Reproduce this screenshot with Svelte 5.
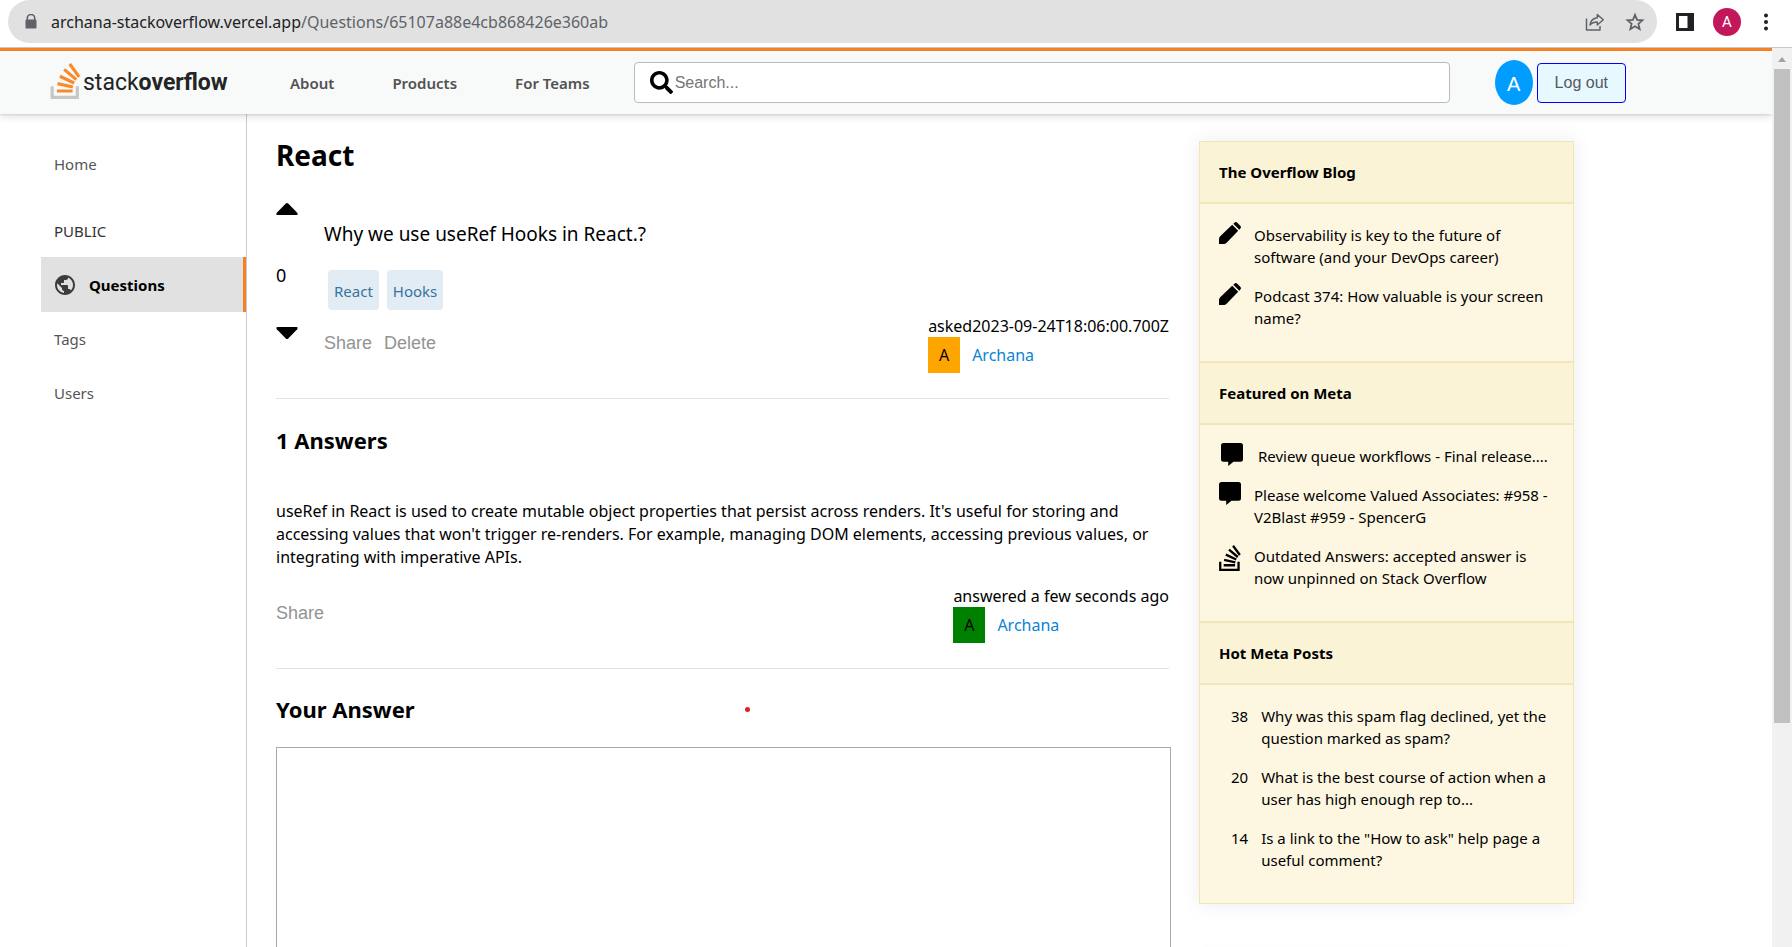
<script>
  const navLinks = ['About', 'Products', 'For Teams'];
  const tags = ['React', 'Hooks'];
  const blogPosts = [
    'Observability is key to the future of software (and your DevOps career)',
    'Podcast 374: How valuable is your screen name?'
  ];
  const featured = [
    { icon: 'comment', indent: true, text: 'Review queue workflows - Final release....' },
    { icon: 'comment', text: 'Please welcome Valued Associates: #958 - V2Blast #959 - SpencerG' },
    { icon: 'stack', text: 'Outdated Answers: accepted answer is now unpinned on Stack Overflow' }
  ];
  const hotPosts = [
    { score: 38, text: 'Why was this spam flag declined, yet the question marked as spam?' },
    { score: 20, text: 'What is the best course of action when a user has high enough rep to...' },
    { score: 14, text: 'Is a link to the "How to ask" help page a useful comment?' }
  ];
  const bars =
    'M15.725 0l-1.72 1.277 6.39 8.588 1.716-1.277L15.725 0zm-3.94 3.418l-1.369 1.644 8.225 6.85 1.369-1.644-8.225-6.85zm-3.15 4.465l-.905 1.94 9.702 4.517.904-1.94-9.701-4.517zm-1.85 4.86l-.44 2.093 10.473 2.201.44-2.092-10.473-2.203zM6.155 17.603v2.13h10.66v-2.13H6.154Z';
  const tray = 'M1.89 15.47V24h19.19v-8.53h-2.133v6.397H4.021v-6.396H1.89z';
  let query = $state('');
  let answer = $state('');
  let votes = $state(0);
</script>

<div class="window">
  <div class="toolbar">
    <div class="address">
      <svg class="lock" width="12" height="16" viewBox="0 0 12 16" aria-hidden="true">
        <path d="M2.3 6V4.2a3.7 3.7 0 0 1 7.4 0V6" fill="none" stroke="#5f6368" stroke-width="1.6" />
        <rect x="0.5" y="5.6" width="11" height="9" rx="1.2" fill="#5f6368" />
      </svg>
      <span class="url">archana-stackoverflow.vercel.app<span class="path">/Questions/65107a88e4cb868426e360ab</span></span>
      <button class="plain" aria-label="Share this page">
        <svg width="20" height="20" viewBox="0 0 20 20" fill="none" stroke="#5f6368" stroke-width="1.5" stroke-linejoin="round">
          <path d="M1.5 6.5V18h13.5v-4" />
          <path d="M12.3 2.5l6 5.3-6 5.2V9.9c-3.3 0-5.6.9-7.3 3.1.6-4 3-6.700 7.300-7.200z" />
        </svg>
      </button>
      <button class="plain" aria-label="Bookmark this page">
        <svg width="20" height="20" viewBox="0 0 20 20" fill="none" stroke="#5f6368" stroke-width="1.8">
          <path d="M10 2.800l2.100 5 5.400.45-4.100 3.550 1.250 5.300L10 14.250 5.350 17.100l1.250-5.300L2.500 8.250l5.400-.45z" />
        </svg>
      </button>
    </div>
    <button class="plain" aria-label="Side panel">
      <svg width="18" height="18" viewBox="0 0 18 18">
        <path d="M0 0h18v18H0zM3 3v12h8.500V3z" fill="#202124" fill-rule="evenodd" />
      </svg>
    </button>
    <button class="plain profile" aria-label="Profile">A</button>
    <button class="plain" aria-label="Browser menu">
      <svg width="6" height="18" viewBox="0 0 6 18" fill="#202124">
        <circle cx="3" cy="2.500" r="2" /><circle cx="3" cy="9" r="2" /><circle cx="3" cy="15.500" r="2" />
      </svg>
    </button>
  </div>

  <div class="viewport">
    <div class="page">
      <header>
        <a class="logo" href="#home" aria-label="Stack Overflow">
          <svg width="31" height="36" viewBox="1.500 0 21 24" preserveAspectRatio="none">
            <path d={bars} fill="#f98a2b" /><path d={tray} fill="#c6c6c6" />
          </svg>
          <span>stack<b>overflow</b></span>
        </a>
        <nav class="top">
          {#each navLinks as link}<a href="#top">{link}</a>{/each}
        </nav>
        <form class="search" role="search">
          <svg width="23" height="23" viewBox="0 0 512 512" aria-hidden="true">
            <path d="M505 442.700L405.300 343c-4.500-4.500-10.600-7-17-7H372c27.600-35.300 44-79.700 44-128C416 93.100 322.900 0 208 0S0 93.100 0 208s93.100 208 208 208c48.300 0 92.700-16.400 128-44v16.300c0 6.400 2.500 12.500 7 17l99.700 99.700c9.400 9.400 24.600 9.400 33.900 0l28.300-28.300c9.400-9.400 9.400-24.600.1-34zM208 336c-70.700 0-128-57.200-128-128 0-70.700 57.200-128 128-128 70.700 0 128 57.200 128 128 0 70.700-57.200 128-128 128z" />
          </svg>
          <input type="text" placeholder="Search..." aria-label="Search" bind:value={query} />
        </form>
        <div class="account">
          <span class="avatar">A</span>
          <button class="logout">Log out</button>
        </div>
      </header>

      <div class="body">
        <nav class="side" aria-label="Sections">
          <a href="#home">Home</a>
          <p>PUBLIC</p>
          <a class="active" href="#questions">
            <svg width="24" height="24" viewBox="0 0 24 24" fill="#3c3c3c" aria-hidden="true">
              <path d="M12 2C6.480 2 2 6.480 2 12s4.480 10 10 10 10-4.480 10-10S17.520 2 12 2zm-1 17.930c-3.950-.49-7-3.850-7-7.930 0-.62.08-1.210.21-1.790L9 15v1c0 1.100.9 2 2 2v1.930zm6.900-2.540c-.26-.81-1-1.390-1.900-1.390h-1v-3c0-.55-.45-1-1-1H8v-2h2c.55 0 1-.45 1-1V7h2c1.100 0 2-.9 2-2v-.41c2.930 1.190 5 4.060 5 7.410 0 2.080-.8 3.970-2.100 5.390z" />
            </svg>
            Questions
          </a>
          <a href="#tags">Tags</a>
          <a href="#users">Users</a>
        </nav>

        <main>
          <h1>React</h1>
          <section class="question">
            <div class="votes">
              <button class="plain" aria-label="Up vote" onclick={() => votes++}>
                <svg width="22" height="12" viewBox="0 0 22 12"><path d="M9.800.6q1.200-1 2.400 0l9 9.200q1.200 2.200-.8 2.200H1.600q-2 0-.8-2.200z" /></svg>
              </button>
              <span>{votes}</span>
              <button class="plain" aria-label="Down vote" onclick={() => votes--}>
                <svg width="22" height="12" viewBox="0 0 22 12"><path d="M9.800 11.400q1.200 1 2.400 0l9-9.200Q22.400 0 20.400 0H1.600Q-.4 0 .8 2.200z" /></svg>
              </button>
            </div>
            <div class="content">
              <p class="asked">Why we use useRef Hooks in React.?</p>
              <ul class="tags">
                {#each tags as tag}<li><a href="#tags">{tag}</a></li>{/each}
              </ul>
              <div class="meta">
                <div class="actions"><button class="plain">Share</button><button class="plain">Delete</button></div>
                <div class="author">
                  <p>asked2023-09-24T18:06:00.700Z</p>
                  <a href="#user"><span class="badge">A</span>Archana</a>
                </div>
              </div>
            </div>
          </section>

          <section class="answers">
            <h2>1 Answers</h2>
            <p class="text">
              useRef in React is used to create mutable object properties that persist across renders. It's useful for
              storing and accessing values that won't trigger re-renders. For example, managing DOM elements, accessing
              previous values, or integrating with imperative APIs.
            </p>
            <div class="meta">
              <div class="actions"><button class="plain">Share</button></div>
              <div class="author">
                <p>answered a few seconds ago</p>
                <a href="#user"><span class="badge green">A</span>Archana</a>
              </div>
            </div>
          </section>

          <section class="reply">
            <div class="reply-head">
              <h2><label for="answer">Your Answer</label></h2>
              <i class="dot"></i>
            </div>
            <textarea id="answer" bind:value={answer}></textarea>
          </section>
        </main>

        <div class="rail">
          <aside class="widget">
            <h3>The Overflow Blog</h3>
            <ul>
              {#each blogPosts as post}
                <li>
                  <svg width="22" height="22" viewBox="0 0 22 22" aria-hidden="true">
                    <path d="M0 22v-4.800q0-1.700 1.200-2.900L13.200 2.800l6 6L7.600 20.700Q6.400 22 4.800 22zM14.300 1.700l1.100-1q1.500-1.300 2.900 0l3 3q1.300 1.400 0 2.900l-1 1.100z" />
                  </svg>
                  <span>{post}</span>
                </li>
              {/each}
            </ul>
            <h3>Featured on Meta</h3>
            <ul>
              {#each featured as item}
                <li class:indent={item.indent}>
                  {#if item.icon === 'comment'}
                    <svg width="22" height="23" viewBox="0 0 22 23" aria-hidden="true">
                      <path d="M2.500 0h17Q22 0 22 2.500v13.800q0 2.500-2.500 2.500H12.500L7.200 23v-4.200H2.500Q0 18.800 0 16.300V2.500Q0 0 2.500 0z" />
                    </svg>
                  {:else}
                    <svg class="stack" width="22" height="26" viewBox="1.800 0 20.500 24" preserveAspectRatio="none" aria-hidden="true">
                      <path d={bars} /><path d={tray} />
                    </svg>
                  {/if}
                  <span>{item.text}</span>
                </li>
              {/each}
            </ul>
            <h3>Hot Meta Posts</h3>
            <ul class="hot">
              {#each hotPosts as post}
                <li><span class="score">{post.score}</span><span>{post.text}</span></li>
              {/each}
            </ul>
          </aside>
          <aside class="widget"></aside>
        </div>
      </div>
    </div>

    <div class="scroll" aria-hidden="true">
      <svg width="8" height="5" viewBox="0 0 8 5"><path d="M4 0l4 5H0z" fill="#a3a3a3" /></svg>
      <div class="thumb"></div>
    </div>
  </div>
</div>

<style>
  :global(body) { margin: 0; background: #fff; }
  .window {
    height: 100vh;
    display: flex;
    flex-direction: column;
    overflow: hidden;
    font: 16px/22px 'Noto Sans', 'Segoe UI', sans-serif;
    color: #000;
  }
  p, h1, h2, h3, ul { margin: 0; padding: 0; }
  ul { list-style: none; }
  a { color: inherit; text-decoration: none; }
  svg { display: block; flex: none; }
  button { font: 18px/20px 'Liberation Sans', Arial, sans-serif; cursor: pointer; }
  .plain { border: 0; padding: 0; background: none; color: #939393; }

  .toolbar {
    flex: none;
    display: flex;
    align-items: center;
    gap: 19px;
    height: 43px;
    padding: 0 23px 4px 8px;
    border-bottom: 1px solid #c6c6c6;
  }
  .address {
    flex: 1;
    align-self: stretch;
    display: flex;
    align-items: center;
    gap: 20px;
    padding: 0 12px 0 17px;
    border-radius: 22px;
    background: #e1e1e1;
  }
  .url { flex: 1; margin-left: -6px; color: #202124; }
  .path { color: #5f6368; }
  .profile {
    width: 28px;
    height: 28px;
    margin-right: 3px;
    border-radius: 50%;
    background: #c2185b;
    color: #fff;
    font: 15px/28px Roboto, sans-serif;
  }

  .viewport { flex: 1; min-height: 0; display: flex; }
  .page { flex: 1; min-width: 0; overflow: hidden; }
  .scroll {
    width: 20px;
    box-sizing: border-box;
    display: flex;
    flex-direction: column;
    align-items: center;
    padding: 9px 2px 0;
    background: #f1f1f1;
  }
  .thumb { width: 16px; height: calc(73% + 4px); margin-top: 7px; background: #c1c1c1; }

  header {
    display: flex;
    align-items: center;
    height: 63px;
    padding: 0 146px 0 50px;
    border-top: 3px solid #f48225;
    background: #f8f9f9;
    box-shadow: 0 1px 2px rgba(0, 0, 0, .1), 0 2px 8px rgba(0, 0, 0, .14);
    position: relative;
  }
  .logo { display: flex; align-items: center; gap: 2px; width: 175px; font: 23px/26px Roboto, sans-serif; color: #222426; }
  .logo svg { margin-bottom: 4px; }
  .top { display: flex; gap: 58px; margin: 0 44px 0 65px; font-size: 15px; font-weight: 600; color: #525252; white-space: nowrap; }
  .search {
    flex: 1;
    display: flex;
    align-items: center;
    gap: 2px;
    height: 39px;
    padding-left: 15px;
    border: 1px solid #bbb;
    border-radius: 4px;
    background: #fff;
  }
  .search input {
    flex: 1;
    border: 0;
    padding: 0;
    outline: 0;
    background: none;
    font: 16px/20px 'Liberation Sans', Arial, sans-serif;
  }
  .search input::placeholder { color: #757575; }
  .account { display: flex; align-items: center; gap: 4px; margin-left: 45px; }
  .avatar {
    width: 38px;
    height: 45px;
    border-radius: 50%;
    background: #009dff;
    color: #fff;
    font: 20px/48px 'Liberation Sans', Arial, sans-serif;
    text-align: center;
  }
  .logout {
    padding: 9px 17px;
    border: 1px solid #00f;
    border-radius: 4px;
    background: #e7f8fe;
    color: #525960;
    font-size: 16px;
  }

  .body { display: flex; min-height: 100%; padding: 0 198px 0 41px; }
  .side {
    width: 205px;
    flex: none;
    padding-top: 23px;
    border-right: 1px solid #c8ccd0;
    font-size: 15px;
    color: #555;
  }
  .side a, .side p { display: flex; align-items: center; height: 54px; padding-left: 13px; }
  .side p { height: 26px; margin: 27px 0 13px; color: #333; }
  .side .active {
    gap: 12px;
    height: 55px;
    padding-left: 12px;
    border-right: 3px solid #f48225;
    background: #e1e1e1;
    color: #000;
    font-weight: 700;
  }

  main { flex: 1; min-width: 0; padding: 21px 30px 0 29px; }
  h1 { font-size: 28px; line-height: 40px; }
  h2 { font-size: 22px; line-height: 30px; }
  .question { display: flex; gap: 26px; border-bottom: 1px solid #e1e2e3; }
  .votes { display: flex; flex-direction: column; width: 22px; padding-top: 28px; font-size: 18px; line-height: 24px; }
  .votes span { margin: 48px 0 40px; }
  .content { flex: 1; padding-top: 47px; }
  .asked { font-size: 19px; line-height: 24px; }
  .tags { display: flex; gap: 8px; margin: 24px 0 6px 4px; }
  .tags a { display: block; height: 30px; padding: 5px 6px; border-radius: 4px; background: #e1ecf4; color: #39739d; font-size: 15px; line-height: 32px; }
  .meta { display: flex; justify-content: space-between; align-items: center; padding-bottom: 25px; }
  .actions { display: flex; gap: 12px; margin-bottom: 4px; }
  .author p { line-height: 21px; }
  .author a { display: flex; align-items: center; gap: 12px; color: #0a84d6; }
  .badge { width: 32px; background: #ffa500; color: #000; line-height: 36px; text-align: center; }
  .badge.green { background: #008000; }
  .answers { padding-top: 26px; border-bottom: 1px solid #e1e2e3; }
  .text { margin: 45px 0 17px; line-height: 23px; }
  .reply { padding-top: 25px; }
  .reply-head { display: grid; grid-template-columns: 469px 1fr; align-items: center; }
  .dot { width: 5px; height: 5px; border-radius: 50%; background: #e81c23; }
  textarea {
    display: block;
    box-sizing: border-box;
    width: calc(100% + 2px);
    height: 400px;
    margin-top: 23px;
    border: 1px solid #a9a9a9;
    resize: none;
    font: inherit;
  }

  .rail { width: 375px; flex: none; padding-top: 27px; }
  .widget {
    margin-bottom: 48px;
    border: 1px solid #f1e5bc;
    background: #fdf7e2;
    box-shadow: 0 0 20px rgba(0, 0, 0, .08);
    font-size: 15px;
  }
  h3 {
    padding-left: 19px;
    border-top: 2px solid #f1e5bc;
    border-bottom: 2px solid #f1e5bc;
    background: #fbf3d5;
    font-size: 15px;
    line-height: 60px;
  }
  h3:first-child { border-top: 0; }
  .widget ul { display: grid; gap: 17px; padding: 20px 17px 32px 19px; }
  .widget li { display: flex; gap: 13px; }
  .widget li svg { margin-top: -2px; }
  .widget li svg.stack { margin-top: 0; }
  .widget li.indent { padding-left: 2px; }
  .widget li.indent span { margin-left: 2px; }
  .hot .score { margin-left: 12px; }
</style>
